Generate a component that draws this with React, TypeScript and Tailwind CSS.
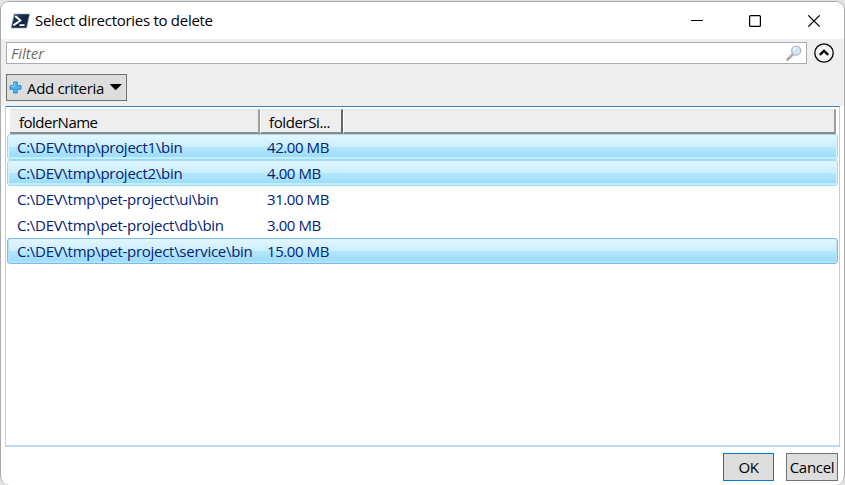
import React from 'react';

type Row = { name: string; size: string; state: 'none' | 'selected' | 'focused' };

const rows: Row[] = [
  { name: 'C:\\DEV\\tmp\\project1\\bin', size: '42.00 MB', state: 'selected' },
  { name: 'C:\\DEV\\tmp\\project2\\bin', size: '4.00 MB', state: 'selected' },
  { name: 'C:\\DEV\\tmp\\pet-project\\ui\\bin', size: '31.00 MB', state: 'none' },
  { name: 'C:\\DEV\\tmp\\pet-project\\db\\bin', size: '3.00 MB', state: 'none' },
  { name: 'C:\\DEV\\tmp\\pet-project\\service\\bin', size: '15.00 MB', state: 'focused' },
];

const rowStyles = {
  none: 'border-transparent',
  selected:
    'border-[#98dbf9] bg-[linear-gradient(#e2f6fe_0%,#c9effd_49%,#b6e7fc_51%,#9cdcf9_92%,#c9effd_94%)] shadow-[inset_1px_0_#d9f4fe,inset_-1px_0_#d9f4fe]',
  focused:
    'border-[#78bbed] bg-[linear-gradient(#e2f6fe_0%,#c9effd_49%,#b6e7fc_51%,#9cdcf9_92%,#b5e3f8_94%)] shadow-[inset_1px_0_#b5e3f8,inset_-1px_0_#b5e3f8]',
};

function PowerShellIcon() {
  return (
    <svg width="20" height="16" viewBox="0 0 20 16" className="shrink-0">
      <defs>
        <linearGradient id="ps" x1="0" y1="0" x2="1" y2="1">
          <stop offset="0" stopColor="#2d5078" />
          <stop offset=".5" stopColor="#10233f" />
          <stop offset="1" stopColor="#1a365b" />
        </linearGradient>
      </defs>
      <path d="M4.2 1H19.6L16.6 15H1.2Z" fill="url(#ps)" stroke="#8ea3bb" strokeWidth=".6" />
      <path d="M5.2 3L10.4 7.5L3.4 12.4" fill="none" stroke="#fff" strokeWidth="2" />
      <path d="M9.5 12.2H14.5" stroke="#fff" strokeWidth="1.8" />
    </svg>
  );
}

function TitleBar() {
  return (
    <header className="flex h-[37px] shrink-0 items-center bg-white pl-[9px] pr-[23px]">
      <PowerShellIcon />
      <span className="ml-[5px] flex-1 pb-[2px] text-[15px] tracking-[-0.28px] text-black">Select directories to delete</span>
      <svg width="130" height="12" viewBox="0 0 130 12" fill="none" stroke="#000">
        <path d="M0 5.5H12" />
        <rect x="58.6" y=".6" width="10.8" height="10.8" rx="1" strokeWidth="1.2" />
        <path d="M117.3 .3L128.7 11.7M128.7 .3L117.3 11.7" strokeWidth="1.15" />
      </svg>
    </header>
  );
}

function FilterBar() {
  return (
    <div className="flex h-[28px] items-start pl-[5px] pt-[3px]">
      <div className="flex h-[22px] w-[801px] items-center justify-between border border-[#abadb3] bg-white pl-1 pr-[3px]">
        <span className="pb-px text-[15px] italic tracking-[0px] text-[#6c6c6c]">Filter</span>
        <svg width="18" height="18" viewBox="0 0 18 18">
          <path d="M2.5 15.5L8 10" stroke="#a3a3a3" strokeWidth="2.6" strokeLinecap="round" />
          <path d="M3 14.5L7 10.5" stroke="#d2d2d2" strokeWidth=".8" />
          <circle cx="11.2" cy="6.7" r="4.5" fill="#cce6fa" stroke="#b3b9c4" strokeWidth="1.3" />
          <path d="M8.5 6Q9 4 11 3.7" fill="none" stroke="#fff" strokeWidth="1.5" />
        </svg>
      </div>
      <svg width="22" height="22" viewBox="0 0 22 22" className="ml-[6px]" fill="none" stroke="#000">
        <circle cx="11" cy="11" r="9.2" fill="#f5f5f5" strokeWidth="1.3" />
        <path d="M6.8 12.8L11 8.8L15.2 12.8" strokeWidth="2.3" />
      </svg>
    </div>
  );
}

function AddCriteria() {
  return (
    <button className="ml-[5px] mt-[7px] flex h-[27px] w-[121px] items-center border border-[#707070] bg-[#dddddd] pl-[2px]">
      <svg width="13" height="13" viewBox="0 0 13 13" className="shrink-0">
        <path d="M4.7 1H8.3V4.7H12V8.3H8.3V12H4.7V8.3H1V4.7H4.7Z" fill="#47b3ee" stroke="#2387c7" strokeWidth=".9" />
        <path d="M5.5 2V5.5H2" fill="none" stroke="#8dd7fa" />
      </svg>
      <span className="ml-[5px] w-[78px] whitespace-nowrap text-left text-[15px] tracking-[-0.33px]">Add criteria</span>
      <svg width="14" height="7" viewBox="0 0 14 7" className="ml-[4px] shrink-0">
        <path d="M.5 0H13L6.7 6.3Z" fill="#000" />
      </svg>
    </button>
  );
}

function TableHeader() {
  const cell = 'flex h-[25px] items-center border-b-2 border-r-2 border-b-[#8b8b8b] border-t border-t-[#dce3e7] bg-[#eeeeee] pt-[2px] text-[15px]';
  return (
    <div className="ml-[4px] mt-[2px] flex w-[826px]">
      <div className={`${cell} w-[250px] border-r-[#a0a0a0] pl-[9px] tracking-[-0.5px]`}>folderName</div>
      <div className={`${cell} w-[83px] border-l border-l-white border-r-[#666666] pl-[8px] tracking-[-0.4px]`}>folderSi...</div>
      <div className={`${cell} w-[493px] border-l border-l-white border-r-[#a0a0a0]`} />
    </div>
  );
}

export default function App() {
  return (
    <div className="h-[485px] w-[845px] overflow-hidden bg-[#e3e3e3] pt-px font-['Open_Sans','Noto_Sans',sans-serif] leading-[20px]">
      <div className="flex h-[484px] w-[845px] flex-col overflow-hidden rounded-[9px] border border-b-0 border-[#aaaaaa] bg-white">
        <TitleBar />
        <section className="h-[67px] shrink-0 bg-[#efefef]">
          <FilterBar />
          <AddCriteria />
        </section>
        <main className="ml-[4px] h-[341px] w-[835px] shrink-0 border border-b-2 border-x-[#b0d4e8] border-b-[#b9dbeb] border-t-[#3e82b8] bg-white">
          <TableHeader />
          <div className="ml-px flex w-[831px] flex-col">
            {rows.map((row) => (
              <div
                key={row.name}
                className={`flex h-[26px] items-center rounded-[3px] border pb-px text-[15px] text-[#042271] ${rowStyles[row.state]}`}
              >
                <span className="w-[251px] whitespace-nowrap pl-[9px] tracking-[-0.28px]">{row.name}</span>
                <span className="pl-[8px] tracking-[-0.42px]">{row.size}</span>
              </div>
            ))}
          </div>
        </main>
        <footer className="flex justify-end gap-[12px] pr-[6px] pt-[6px] text-[15px]">
          <button className="h-[28px] w-[51px] border border-[#0078d7] bg-[#dddddd] tracking-[-0.4px]">OK</button>
          <button className="h-[28px] w-[52px] border border-[#707070] bg-[#dddddd] tracking-[-0.3px]">Cancel</button>
        </footer>
      </div>
    </div>
  );
}
